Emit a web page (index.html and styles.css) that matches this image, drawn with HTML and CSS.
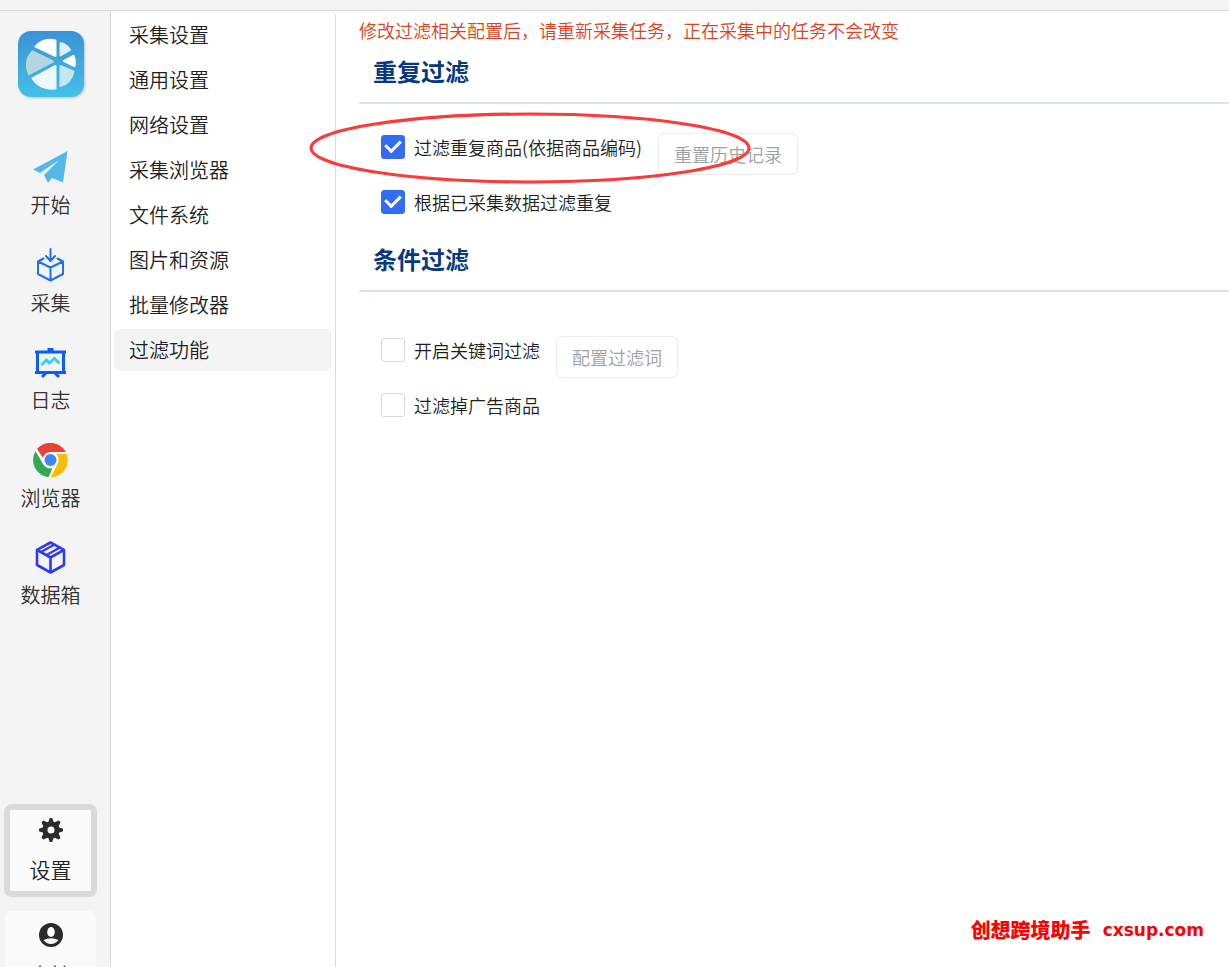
FILE: index.html
```html
<!DOCTYPE html>
<html lang="zh-CN">
<head>
  <meta charset="UTF-8">
  <title>过滤功能</title>
  <meta name="viewport" content="width=device-width, initial-scale=1.0">
  <link rel="stylesheet" href="styles.css">
</head>
<body>
  <header class="titlebar"></header>

  <div class="app">
    <aside class="sidebar">
      <svg class="logo" viewBox="0 0 72 72" aria-hidden="true">
        <defs>
          <linearGradient id="logoBg" x1="0" y1="0" x2="0" y2="1">
            <stop offset="0" stop-color="#3993d4"/>
            <stop offset="1" stop-color="#44c0e8"/>
          </linearGradient>
        </defs>
        <rect x="3" y="3" width="66" height="66" rx="13" fill="url(#logoBg)"/>
        <g stroke-linejoin="round" stroke-width="2">
          <path d="M40.500 28V12.500Q29 9.500 20.500 18.500Z" fill="#fff" stroke="#fff"/>
          <path d="M45.500 27.500V15Q52 16.500 55 22Z" fill="#dceff6" stroke="#dceff6"/>
          <path d="M49 33L58.500 28Q60.500 32 59.500 38Z" fill="#fff" stroke="#fff"/>
          <path d="M45.500 38L58.500 43.500Q56 55 45.500 58Z" fill="#c3e7f2" stroke="#c3e7f2"/>
          <path d="M40.500 38L17.500 50.500Q25 62 40.500 60.500Z" fill="#eef8fa" stroke="#eef8fa"/>
          <path d="M38 33.500L17.500 23.500Q8.500 33 14 46Z" fill="#b4d6e1" stroke="#b4d6e1"/>
        </g>
      </svg>

      <nav class="nav">
        <a class="nav-item" href="#">
          <svg viewBox="0 0 36 36">
            <path d="M34.500 1L30 32.500L19 28L15 33L11 25L26 10L7 23L0 19.500Z" fill="#54b8e9"/>
          </svg>
          <span>开始</span>
        </a>
        <a class="nav-item" href="#">
          <svg viewBox="0 0 36 36" fill="none" stroke="#2170ee" stroke-width="2" stroke-linejoin="round" stroke-linecap="round">
            <path d="M17.500 1V12M13 8L17.500 13L22 8M10.500 10.500L5 13.500V26L17.500 32.500L30 26V13.500L24.500 10.500M5 13.500L17.500 19.500L30 13.500M17.500 19.500V32.500"/>
          </svg>
          <span>采集</span>
        </a>
        <a class="nav-item" href="#">
          <svg viewBox="0 0 36 36" fill="none" stroke="#0b5cff" stroke-width="3">
            <path d="M2 7H33M4.500 7V27.500M30.500 7V27.500M2 27.500H33M14.500 4.500H20.500M13.500 27.500L9 32M21.500 27.500L26 32"/>
            <path d="M8.500 20L13.500 15L16.500 18L21.500 13.500L26.500 18.500" stroke="#35cdf0" stroke-width="2.800"/>
          </svg>
          <span>日志</span>
        </a>
        <a class="nav-item" href="#">
          <svg viewBox="0 1 36 36">
            <circle cx="17.500" cy="18" r="17.500" fill="#fff"/>
            <path d="M4 7A17.500 17.500 0 0 1 32.800 10H17.500A8 8 0 0 0 10 16Z" fill="#ea4335"/>
            <path d="M33.700 12A17.500 17.500 0 0 1 17.500 35.500L24.500 22A8 8 0 0 0 23 12Z" fill="#fbbc05"/>
            <path d="M2.500 9A17.500 17.500 0 0 0 15.500 35.300L19.500 26A8 8 0 0 1 10 22Z" fill="#34a853"/>
            <circle cx="17.500" cy="18" r="7.500" fill="#fff"/>
            <circle cx="17.500" cy="18" r="6" fill="#4285f4"/>
          </svg>
          <span>浏览器</span>
        </a>
        <a class="nav-item" href="#">
          <svg viewBox="0 0 36 36" fill="none" stroke="#2e3bf0" stroke-width="2.600" stroke-linejoin="round">
            <path d="M17.500 2.500L31 9.800V25L17.500 32.500L4 25V9.800ZM4 9.800L17.500 17.500L31 9.800M17.500 17.500V32.500"/>
            <path d="M8 12L21.500 4.500M13.500 15L27 7.500" stroke-width="2.200"/>
          </svg>
          <span>数据箱</span>
        </a>
      </nav>

      <div class="bottom">
        <a class="card active" href="#">
          <svg viewBox="0 0 24 24" fill="none" stroke="#2b2b2b">
            <circle cx="12" cy="12" r="6" stroke-width="5"/>
            <path d="M9 5L10.800 0H13.200L15 5ZM9 19L10.800 24H13.200L15 19ZM5 9L0 10.800V13.200L5 15ZM19 9L24 10.800V13.200L19 15ZM4.500 9L2.500 4.200L4.200 2.500L9 4.500ZM15 4.500L19.800 2.500L21.500 4.200L19.500 9ZM4.500 15L2.500 19.800L4.200 21.500L9 19.500ZM19.500 15L21.500 19.800L19.800 21.500L15 19.500Z" fill="#2b2b2b" stroke="none"/>
          </svg>
          <span>设置</span>
        </a>
        <a class="card" href="#">
          <svg viewBox="0 0 24 24">
            <circle cx="12" cy="12" r="12" fill="#2b2b2b"/>
            <ellipse cx="12" cy="9" rx="3.800" ry="5" fill="#fbfbfb"/>
            <path d="M4.500 17Q12 13.500 19.500 17Q16.500 21 12 21T4.500 17Z" fill="#fbfbfb"/>
          </svg>
          <span>支持</span>
        </a>
      </div>
    </aside>

    <nav class="menu">
      <a href="#">采集设置</a>
      <a href="#">通用设置</a>
      <a href="#">网络设置</a>
      <a href="#">采集浏览器</a>
      <a href="#">文件系统</a>
      <a href="#">图片和资源</a>
      <a href="#">批量修改器</a>
      <a class="selected" href="#">过滤功能</a>
    </nav>

    <main class="content">
      <p class="notice">修改过滤相关配置后，请重新采集任务，正在采集中的任务不会改变</p>

      <section>
        <h2>重复过滤</h2>
        <div class="options">
          <div class="row">
            <label><input type="checkbox" checked> 过滤重复商品(依据商品编码)</label>
            <button type="button" disabled>重置历史记录</button>
          </div>
          <div class="row">
            <label><input type="checkbox" checked> 根据已采集数据过滤重复</label>
          </div>
        </div>
      </section>

      <section>
        <h2>条件过滤</h2>
        <div class="options spaced">
          <div class="row">
            <label><input type="checkbox"> 开启关键词过滤</label>
            <button type="button" disabled>配置过滤词</button>
          </div>
          <div class="row">
            <label><input type="checkbox"> 过滤掉广告商品</label>
          </div>
        </div>
      </section>

      <svg class="circle-mark" viewBox="0 0 442 72" aria-hidden="true">
        <ellipse cx="221" cy="36" rx="219" ry="34" fill="none" stroke="#fb3a3a" stroke-width="3"/>
      </svg>
    </main>
  </div>

  <div class="watermark"><span>创想跨境助手</span><span class="site">cxsup.com</span></div>
</body>
</html>
```
FILE: styles.css
```css
* {
  box-sizing: border-box;
}

body {
  margin: 0;
  height: 100vh;
  display: flex;
  flex-direction: column;
  overflow: hidden;
  font-family: "Noto Sans CJK SC", sans-serif;
  font-weight: 350;
  color: #1f1f1f;
  background: #fff;
}

a {
  color: inherit;
  text-decoration: none;
}

.titlebar {
  flex: none;
  height: 11px;
  background: #f4f4f4;
  border-bottom: 1px solid #d9d9d9;
}

.app {
  flex: 1;
  min-height: 0;
  display: flex;
}

/* left icon bar */
.sidebar {
  flex: none;
  width: 111px;
  padding: 17px 9px 0 0;
  display: flex;
  flex-direction: column;
  align-items: center;
  background: #f4f4f4;
  border-right: 1px solid #d9d9d9;
  overflow: hidden;
}

.logo {
  flex: none;
  width: 72px;
  height: 72px;
  filter: drop-shadow(1px 1px 1px #b9c6dd);
}

.nav {
  flex: none;
  height: 488px;
  margin-top: 50px;
  display: flex;
  flex-direction: column;
}

.nav-item {
  flex: 1;
  display: flex;
  flex-direction: column;
  align-items: center;
  gap: 5px;
  font-size: 20px;
  line-height: 28px;
  color: #333;
}

.nav-item svg {
  width: 36px;
  height: 36px;
}

.bottom {
  display: flex;
  flex-direction: column;
  align-items: center;
  gap: 14px;
  margin-top: 166px;
}

.card {
  flex: none;
  width: 91px;
  height: 93px;
  padding-top: 12px;
  display: flex;
  flex-direction: column;
  align-items: center;
  gap: 12px;
  font-size: 21px;
  line-height: 30px;
  color: #222;
  background: #fbfbfb;
  border-radius: 6px;
}

.card.active {
  width: 93px;
  padding-top: 8px;
  border: 6px solid #dadada;
  border-radius: 8px;
}

.card svg {
  width: 24px;
  height: 24px;
}

/* settings categories */
.menu {
  flex: none;
  width: 225px;
  padding: 3px;
  display: flex;
  flex-direction: column;
  gap: 3px;
  border-right: 1px solid #dcdcdc;
  border-top-right-radius: 6px;
}

.menu a {
  padding: 0 15px;
  font-size: 20px;
  line-height: 42px;
  border-radius: 6px;
}

.menu .selected {
  background: #f4f4f4;
}

/* filter settings */
.content {
  position: relative;
  flex: 1;
  min-width: 0;
  padding: 5px 0 0 23px;
}

.notice {
  margin: 0;
  font-size: 18px;
  line-height: 28px;
  color: #d9441f;
}

h2 {
  margin: 0;
  padding: 8px 14px 12px;
  font-size: 24px;
  line-height: 38px;
  font-weight: 700;
  color: #063a80;
  border-bottom: 2px solid #dbe7e7;
}

.options {
  padding: 15px 22px 3px;
}

.options.spaced {
  padding-top: 30px;
}

.row {
  display: flex;
  gap: 16px;
  height: 55px;
}

.row label {
  display: flex;
  gap: 9px;
  align-items: center;
  font-size: 18px;
}

input[type="checkbox"] {
  appearance: none;
  width: 24px;
  height: 24px;
  margin: 0;
  display: grid;
  place-items: center;
  background: #fff;
  border: 1px solid #d9d9d9;
  border-radius: 3px;
}

input[type="checkbox"]:checked {
  background: #326cf2;
  border-color: #326cf2;
}

input[type="checkbox"]:checked::before {
  content: "";
  width: 7px;
  height: 12px;
  margin-bottom: 4px;
  border: solid #fff;
  border-width: 0 3px 3px 0;
  transform: rotate(45deg);
}

button {
  height: 42px;
  margin-top: 14px;
  padding: 0 15px;
  font: inherit;
  font-size: 18px;
  color: #a0a0a0;
  background: #fff;
  border: 1px solid #ececec;
  border-radius: 6px;
}

/* hand drawn highlight over the first option */
.circle-mark {
  position: absolute;
  left: -27px;
  top: 101px;
  width: 442px;
  height: 72px;
}

.watermark {
  position: absolute;
  right: 25px;
  bottom: 22px;
  display: flex;
  gap: 12px;
  align-items: center;
  font-size: 20px;
  line-height: 30px;
  font-weight: 900;
  color: #f00;
}

.site {
  font-family: "DejaVu Sans", sans-serif;
  font-size: 17px;
  font-weight: 700;
}
```
